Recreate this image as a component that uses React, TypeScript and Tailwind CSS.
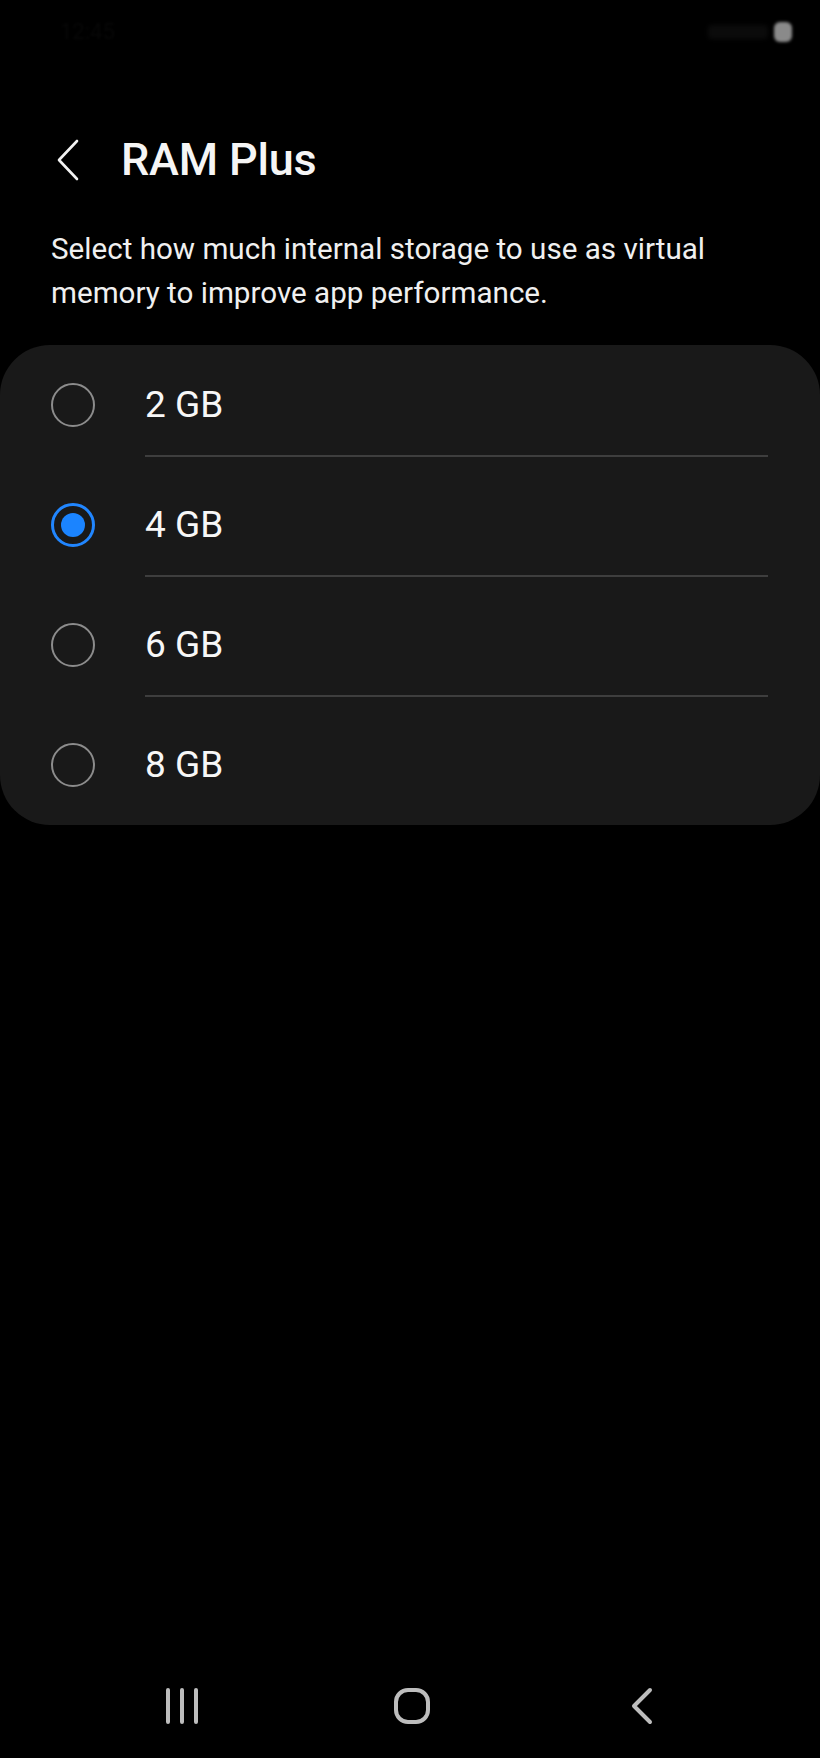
import React from "react";

const options = ["2 GB", "4 GB", "6 GB", "8 GB"];
const selected = 1;

function Radio({ checked }: { checked: boolean }) {
  if (checked) {
    return (
      <div className="w-[44px] h-[44px] rounded-full border-[3px] border-[#2186ff] flex items-center justify-center">
        <div className="w-[24px] h-[24px] rounded-full bg-[#1b84ff]" />
      </div>
    );
  }
  return <div className="w-[44px] h-[44px] rounded-full border-[2px] border-[#8c8c8c]" />;
}

export default function App() {
  return (
    <div
      className="w-[820px] h-[1758px] bg-black flex flex-col text-white"
      style={{ fontFamily: "Roboto, 'Noto Sans', sans-serif" }}
    >
      {/* status bar */}
      <div className="h-[60px] flex items-start justify-between px-[60px] pt-[20px]">
        <div className="text-[22px] leading-[24px] text-[#070707] blur-[1px]">12:45</div>
        <div className="flex items-center gap-[6px] pt-[2px] mr-[-32px]">
          <div className="w-[60px] h-[14px] rounded-[4px] bg-[#0b0b0b] blur-[2px]" />
          <div className="w-[18px] h-[20px] rounded-[6px] bg-[#8a8a8a] blur-[1.5px]" />
        </div>
      </div>

      {/* header */}
      <div className="flex items-center h-[44px] mt-[78px]">
        <div className="w-[121px] pl-[55px] flex items-center">
          <svg width="26" height="44" viewBox="0 0 26 44" fill="none">
            <path d="M22 3 L4 22 L22 41" stroke="#f2f2f2" strokeWidth="2.6" strokeLinecap="round" strokeLinejoin="round" />
          </svg>
        </div>
        <div className="text-[45px] leading-[44px] font-medium text-[#f5f5f5] tracking-[-0.2px]">RAM Plus</div>
      </div>

      {/* description */}
      <div className="mt-[45px] px-[51px] text-[29.6px] leading-[44px] text-[#f0f0f0]">
        Select how much internal storage to use as virtual
        <br />
        memory to improve app performance.
      </div>

      {/* card */}
      <div className="mt-[30px] bg-[#191919] rounded-[50px] flex flex-col">
        {options.map((o, i) => (
          <div key={o} className="flex h-[120px]">
            <div className="w-[145px] pl-[51px] flex items-center">
              <Radio checked={i === selected} />
            </div>
            <div className="flex-1 mr-[52px] flex flex-col">
              <div className="h-[110px] pt-[10px] flex items-center">
                <span className="text-[37px] leading-[40px] text-[#f7f7f7]">{o}</span>
              </div>
              {i < options.length - 1 && <div className="h-[2px] bg-[#3e3e3e]" />}
            </div>
          </div>
        ))}
      </div>

      <div className="flex-1" />

      {/* nav bar */}
      <div className="h-[104px] flex items-center justify-center pl-[4px]">
        <div className="w-[230px] flex justify-center">
          <svg width="36" height="38" viewBox="0 0 36 38" fill="none">
            <path d="M4 3 V35 M18 3 V35 M32 3 V35" stroke="#bdbdbd" strokeWidth="4" strokeLinecap="round" />
          </svg>
        </div>
        <div className="w-[230px] flex justify-center">
          <svg width="38" height="38" viewBox="0 0 38 38" fill="none">
            <rect x="3" y="3" width="32" height="32" rx="12" stroke="#bdbdbd" strokeWidth="4" />
          </svg>
        </div>
        <div className="w-[230px] flex justify-center">
          <svg width="26" height="38" viewBox="0 0 26 38" fill="none">
            <path d="M21 3 L5 19 L21 35" stroke="#bdbdbd" strokeWidth="4" strokeLinecap="round" strokeLinejoin="round" />
          </svg>
        </div>
      </div>
    </div>
  );
}
